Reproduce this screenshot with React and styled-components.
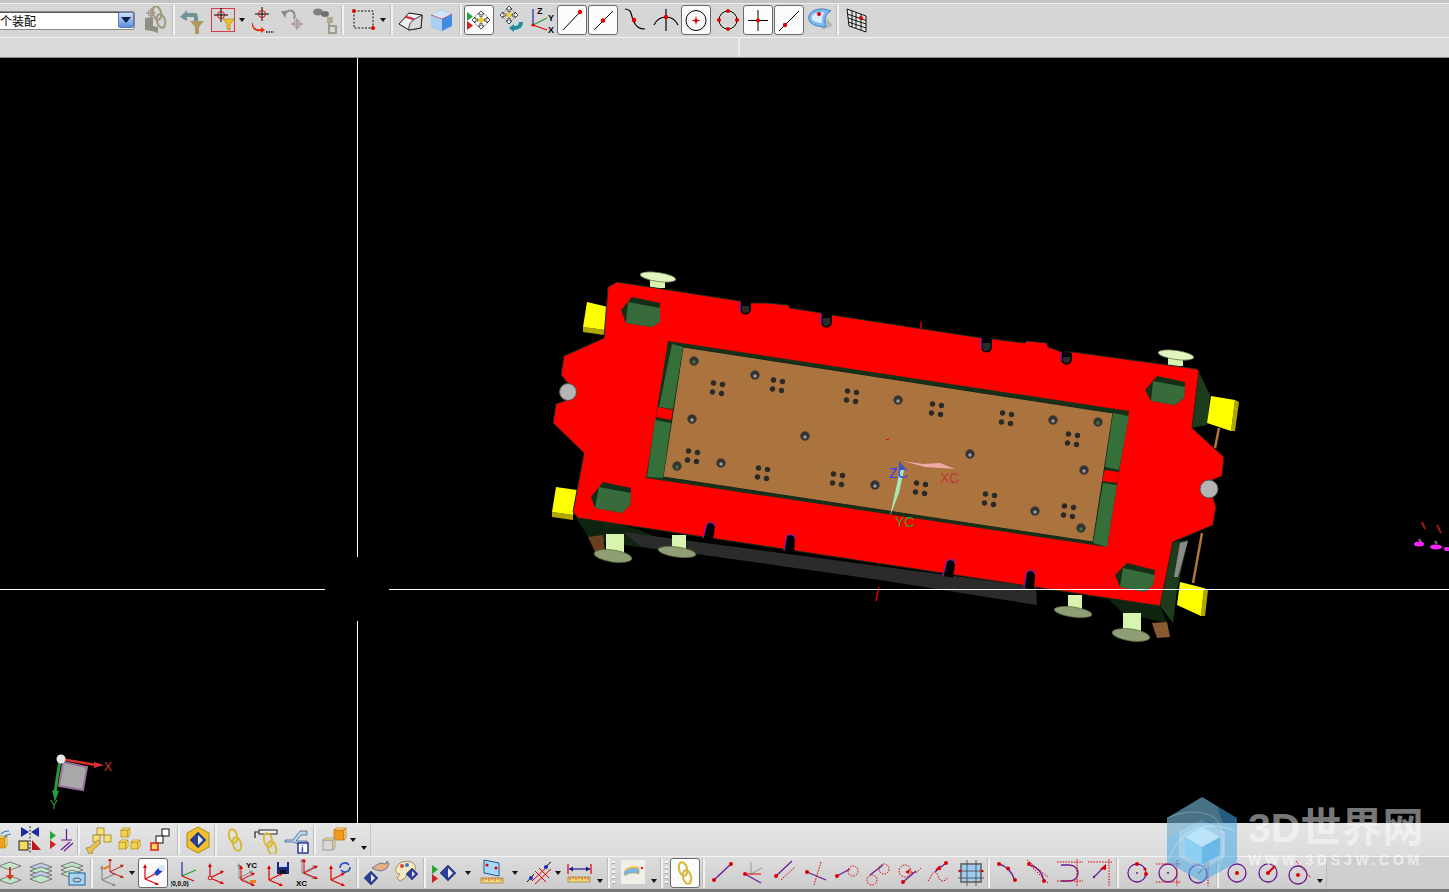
import React from 'react';
import styled, { createGlobalStyle } from 'styled-components';

const GlobalStyle = createGlobalStyle`
  html, body { margin: 0; padding: 0; background: #000; overflow: hidden; }
  body { font-family: "Liberation Sans", Arial, sans-serif; }
`;

const RED = '#e00000';
const PUR = '#6a1a96';
const GOLD = '#d8b83a';

/* small drawing helpers for the toolbar icons, all on a 28x28 box */
const Dot = ({ x, y, r = 2, c = RED }) => <circle cx={x} cy={y} r={r} fill={c} />;
const L = ({ d, c = '#000', w = 1, dash }) => (
  <path d={d} fill="none" stroke={c} strokeWidth={w} strokeDasharray={dash} />
);
const Dash = ({ d }) => <L d={d} c={RED} w={1} dash="1.6 1.2" />;
const Cross = ({ x, y, c = '#000', ring = RED, s = 8, r = 4 }) => (
  <>
    <L d={`M${x - s} ${y}H${x + s}M${x} ${y - s}V${y + s}`} c={c} />
    <circle cx={x} cy={y} r={r} fill="none" stroke={ring} />
  </>
);
const Funnel = ({ x, y, c = '#f0c020' }) => (
  <path d={`M${x} ${y}h11l-4 5v6l-3-1v-5z`} fill={c} stroke="#8a7020" strokeWidth=".5" />
);
const Triad = ({ x = 6, y = 20, c = RED, w = 1.2 }) => (
  <g>
    <L d={`M${x} ${y}V${y - 13}M${x} ${y}L${x + 12} ${y - 6}M${x} ${y}L${x + 12} ${y + 5}`} c={c} w={w} />
    <path d={`M${x - 2} ${y - 11}L${x} ${y - 15}L${x + 2} ${y - 11}z`} fill={c} />
    <path d={`M${x + 10} ${y - 7.5}L${x + 14} ${y - 7}L${x + 11.5} ${y - 4}z`} fill={c} />
    <path d={`M${x + 10} ${y + 6}L${x + 14} ${y + 6}L${x + 11.5} ${y + 3}z`} fill={c} />
  </g>
);
const Diamond = ({ x, y, s = 6 }) => (
  <g>
    <path d={`M${x} ${y - s}L${x + s} ${y}L${x} ${y + s}L${x - s} ${y}z`} fill="#2c3f98" stroke="#1a2560" strokeWidth=".5" />
    <path d={`M${x} ${y - s + 3}L${x + s - 3} ${y}L${x} ${y + s - 3}z`} fill="#e8eefc" />
  </g>
);
const Chain = ({ x = 14, y = 14, c = GOLD }) => (
  <g fill="none" stroke={c} strokeWidth="2">
    <ellipse cx={x - 2} cy={y - 4} rx="4" ry="7" transform={`rotate(-14 ${x - 2} ${y - 4})`} />
    <ellipse cx={x + 2} cy={y + 4} rx="4" ry="7" transform={`rotate(-14 ${x + 2} ${y + 4})`} />
  </g>
);
const Box = ({ x, y, s = 7, c = '#f4d050', e = '#b08a10' }) => (
  <g stroke={e} strokeWidth=".7">
    <rect x={x} y={y} width={s} height={s} fill={c} />
    <path d={`M${x} ${y}l2-2h${s}l-2 2zM${x + s} ${y}l2-2v${s}l-2 2z`} fill="#fbe68a" />
  </g>
);
const Tris = ({ x = 3, y = 7 }) => (
  <>
    <path d={`M${x} ${y}l6 4.5l-6 4.5z`} fill="#22a838" />
    <path d={`M${x} ${y + 9}l6 4.5l-6 4.5z`} fill="#d02020" />
  </>
);
const Arrows4 = ({ x, y }) => (
  <g fill="#fff" stroke="#222" strokeWidth=".8">
    <path d={`M${x} ${y - 9}l3 3h-2v3h-2v-3h-2z`} />
    <path d={`M${x} ${y + 9}l3-3h-2v-3h-2v3h-2z`} />
    <path d={`M${x - 9} ${y}l3 3v-2h3v-2h-3v-2z`} />
    <path d={`M${x + 9} ${y}l-3 3v-2h-3v-2h3v-2z`} />
  </g>
);
const Layer = ({ y, c = '#bfe8c8' }) => (
  <path d={`M2 ${y}L13 ${y - 4}L24 ${y}L13 ${y + 4}z`} fill={c} stroke="#555" strokeWidth=".7" />
);
const Ruler = ({ x, y, w = 22 }) => (
  <g>
    <rect x={x} y={y} width={w} height="5" fill="#f0d878" stroke="#8a7020" strokeWidth=".6" />
    <L d={`M${x + 2} ${y}v3M${x + 5} ${y}v2M${x + 8} ${y}v3M${x + 11} ${y}v2M${x + 14} ${y}v3M${x + 17} ${y}v2M${x + 20} ${y}v3`} c={RED} w=".6" />
  </g>
);

const icons = {
  asmFilter: (
    <>
      <path d="M3 12l8-1v9l5 1v6l-6-2-7-1z" fill="#8e8e86" />
      <Cross x={9} y={7} c="#8a8a80" ring="#b08080" s={5} r={3} />
      <Chain x={17} y={11} c="#a09a78" />
    </>
  ),
  backFilter: (
    <>
      <path d="M2 11L9 4v3h8c2 0 3 2 3 5v3h-4v-3c0-1-1-1-2-1H9v4z" fill="#6f9498" />
      <path d="M12 15h14l-5 6v7h-4v-7z" fill="#b09a60" />
    </>
  ),
  crossFilter: (
    <>
      <Cross x={12} y={9} s={7} r={3.5} />
      <Funnel x={14} y={13} />
    </>
  ),
  crossArrow: (
    <>
      <Cross x={14} y={8} s={7} r={3.5} />
      <path d="M5 17c0 5 4 7 8 6v-2l4 3-4 3v-2c-5 1-10-2-9-8z" fill="#e83010" />
      <L d="M18 26h8" c="#222" w="1.5" dash="1.5 1" />
    </>
  ),
  undoCross: (
    <>
      <L d="M5 9c2-5 8-6 10-2 1 2 1 4 0 6" c="#8a8a8a" w="2" />
      <path d="M2 5l6 0-2 7z" fill="#8a8a8a" />
      <Cross x={18} y={18} c="#8a8a8a" ring="#b08080" s={6} r={3.5} />
    </>
  ),
  binoc: (
    <>
      <ellipse cx="8" cy="6" rx="5" ry="3.5" fill="#808080" />
      <ellipse cx="15" cy="8" rx="4" ry="3" fill="#707070" />
      <rect x="17" y="11" width="6" height="6" fill="#b0a890" />
      <L d="M19 17v11M19 20h7v7h-7" c="#a09a88" w="2" />
    </>
  ),
  rubber: (
    <>
      <rect x="6" y="5" width="19" height="17" fill="none" stroke="#111" strokeDasharray="2 1.5" />
      <Dot x={6} y={5} r={2} />
      <Dot x={25} y={22} r={2} />
    </>
  ),
  block: (
    <>
      <path d="M2 18L12 7L25 9L24 22L12 24z" fill="#f0f0f0" stroke="#111" strokeWidth="1" />
      <path d="M12 24C11 20 14 15 18 13L25 9L24 22z" fill="#d8dce0" stroke="#111" strokeWidth=".8" />
      <path d="M8.500 10.700L17 13.300" stroke="#e02030" strokeWidth="2" />
    </>
  ),
  cube: (
    <>
      <path d="M3 9L13 4l11 4v12l-10 5-11-4z" fill="#3f8de0" />
      <path d="M3 9l11 4v12l-11-4z" fill="#a6d0f4" />
      <path d="M3 9L13 4l11 4-10 5z" fill="#d0e6fa" />
      <path d="M3 9l11 4 10-5" fill="none" stroke="#e04060" strokeWidth=".8" />
    </>
  ),
  snap: (
    <>
      <Tris x={2} y={6} />
      <circle cx="16" cy="14" r="7" fill="none" stroke="#aaa" />
      <Arrows4 x={16} y={14} />
      <Dot x={16} y={14} r={2.6} c="#f4d020" />
    </>
  ),
  snapBack: (
    <>
      <circle cx="12" cy="9" r="6" fill="none" stroke="#aaa" />
      <Arrows4 x={12} y={9} />
      <Dot x={12} y={9} r={2.4} c="#f4d020" />
      <path d="M12 22l5-4v2c3 0 5-1 5-4h4c0 5-4 8-9 8v2z" fill="#1f8f9a" />
    </>
  ),
  xyz: (
    <>
      <L d="M5 19V3" c="#1a2aa8" w="1.2" />
      <L d="M5 19L19 12" c="#20a030" w="1.2" />
      <L d="M5 19L19 24" c={RED} w="1.2" />
      <Dot x={5} y={19} r={1.6} />
      <Label x={9} y={8}>Z</Label>
      <Label x={20} y={15}>Y</Label>
      <Label x={20} y={27}>X</Label>
    </>
  ),
  lineEnd: (
    <>
      <L d="M5 24L22 6" />
      <Dot x={22} y={6} r={2.2} />
    </>
  ),
  lineMid: (
    <>
      <L d="M5 24L24 5" />
      <Dot x={14} y={14.5} r={2.2} />
    </>
  ),
  sCurve: (
    <>
      <L d="M4 3c8 0 6 9 9 13 2 5 5 7 11 7" w="1.2" />
      <Dot x={13} y={14} r={2.2} />
    </>
  ),
  inter: (
    <>
      <L d="M2 19c3-6 8-8 12-8s9 2 12 8" w="1.2" />
      <L d="M14 3v22" w="1.2" />
      <Dot x={14} y={11} r={2.2} />
    </>
  ),
  center: (
    <>
      <circle cx="14" cy="14.5" r="10" fill="none" stroke="#000" />
      <path d="M14 10l1 3.500 3.500 1-3.500 1-1 3.500-1-3.500-3.500-1 3.500-1z" fill={RED} />
    </>
  ),
  quad: (
    <>
      <circle cx="14" cy="14" r="9" fill="none" stroke="#000" />
      <Dot x={14} y={5} />
      <Dot x={14} y={23} />
      <Dot x={5} y={14} />
      <Dot x={23} y={14} />
    </>
  ),
  plus: (
    <>
      <L d="M4 14.500H24M14 4V25" />
      <Dot x={14} y={14.5} r={2} />
    </>
  ),
  lineNear: (
    <>
      <L d="M4 25L24 5" />
      <Dot x={10} y={19} r={2.2} />
    </>
  ),
  surf: (
    <>
      <path d="M14 24l12-4-6-8z" fill="#b8b8b8" />
      <path d="M2 10C4 3 15 1 24 5c-5 2-6 7-6 10 0 4 1 6 1 6C10 21 0 18 2 10z" fill="#7fb8ec" stroke="#3a80c8" />
      <path d="M5 10C8 6 14 5 18 7c-3 2-3 6-3 10-5 0-12-2-10-7z" fill="#d8ecfc" />
      <Dot x={12} y={8} r={2} />
    </>
  ),
  grid: (
    <>
      <path d="M5 3L24 10V26L7 20z" fill="#e8e8e8" stroke="#111" />
      <L d="M5.500 8L24 14.500M6 12L24 18M6.500 16L24 22M10 5v16M14 6.500v15.500M19 8v16" w=".9" />
      <Dot x={19} y={12} r={2} />
    </>
  ),

  cubesCut: (
    <>
      <Box x={10} y={12} s={10} c="#f0a020" />
      <L d="M16 8c2-2 5-3 8-3M19 11c2-2 4-3 7-3" c="#3a78c8" w="1.2" />
    </>
  ),
  mirror: (
    <>
      <path d="M5 1l8 5-8 5zM23 1l-8 5 8 5z" fill="#1a2aa8" />
      <rect x="3" y="15" width="9" height="9" fill="#f4d860" stroke="#222" />
      <path d="M16 14l9 10h-9z" fill="#c01818" />
      <L d="M14 0v27" c="#222" w="1" dash="2 1.500" />
    </>
  ),
  perp: (
    <>
      <Tris x={3} y={5} />
      <L d="M14 14H25M19.500 14V3" c={PUR} w="1.2" />
      <L d="M14 24L23 16M17 25L26 17" c={PUR} w="1.2" />
    </>
  ),
  wrench: (
    <>
      <rect x="13" y="2" width="7" height="7" fill="#f6e070" stroke="#8a7020" strokeWidth=".7" />
      <rect x="20" y="9" width="7" height="7" fill="#f6e070" stroke="#8a7020" strokeWidth=".7" />
      <rect x="9" y="9" width="7" height="7" fill="#f6e070" stroke="#8a7020" strokeWidth=".7" />
      <path d="M2 22l4-1 8-7 3 3-8 7-1 4-3 0-1-2z" fill="#e8c050" stroke="#8a7020" strokeWidth=".6" />
    </>
  ),
  cubes3: (
    <>
      <Box x={6} y={4} />
      <Box x={4} y={16} />
      <Box x={16} y={16} />
    </>
  ),
  stairs: (
    <>
      <rect x="16" y="3" width="7" height="7" fill="#fff" stroke="#111" />
      <rect x="10" y="10" width="7" height="7" fill="#fff" stroke="#111" />
      <rect x="5" y="17" width="7" height="7" fill="#f4d860" stroke="#e01010" strokeWidth="1.400" />
    </>
  ),
  hexDiamond: (
    <>
      <path d="M14 1L25 7V21L14 27L3 21V7z" fill="#f0c030" stroke="#b08a10" />
      <Diamond x={14} y={14} s={8} />
    </>
  ),
  chain: <Chain />,
  toolChain: (
    <>
      <rect x="7" y="4" width="18" height="4" fill="#eee" stroke="#222" />
      <L d="M7 6H3V12" c="#222" w="1.2" />
      <Chain x={18} y={18} />
    </>
  ),
  tree: (
    <>
      <path d="M2 14h8l7-9h7v4h-6l-5 6 5 0h6v4h-7l-7-3H2z" fill="#b8d4ec" stroke="#305878" strokeWidth=".7" />
      <rect x="15" y="17" width="10" height="10" fill="#fff" stroke="#1a2a90" strokeWidth="1.400" />
      <Label x={18} y={26} c="#1a2a90">i</Label>
    </>
  ),
  cubes2: (
    <>
      <Box x={14} y={4} s={10} c="#f49a20" e="#c07010" />
      <Box x={3} y={14} s={10} c="#d8d8d8" e="#888" />
    </>
  ),

  planes: (
    <>
      <Layer y={7} />
      <Layer y={21} />
      <path d="M12 8h2v8h3l-4 5-4-5h3z" fill="#e03020" />
    </>
  ),
  stack: (
    <>
      <Layer y={8} c="#c0cce8" />
      <Layer y={12} c="#bfe8c8" />
      <Layer y={16} c="#c0cce8" />
      <Layer y={20} c="#bfe8c8" />
    </>
  ),
  stackView: (
    <>
      <Layer y={7} />
      <Layer y={11} c="#d8e4dc" />
      <Layer y={15} />
      <rect x="10" y="14" width="16" height="12" fill="#a8d4f0" stroke="#1a60a0" />
      <ellipse cx="18" cy="21" rx="4" ry="2" fill="none" stroke="#555" />
    </>
  ),
  triadGray: (
    <>
      <Triad x={5} y={21} c="#8a8a8a" />
      <Triad x={13} y={13} c="#c02018" w={1} />
      <path d="M6 9l6-3 1 2-6 3z" fill="#f08020" />
    </>
  ),
  torch: (
    <>
      <Triad x={6} y={20} />
      <path d="M15 14l6-7 4 4-7 6z" fill="#1a40c8" />
      <ellipse cx="23" cy="9" rx="3.500" ry="3" fill="#d8e8fc" />
    </>
  ),
  origin: (
    <>
      <L d="M11 17V3" c="#1a2aa8" w="1.2" />
      <L d="M11 17L25 11" c="#20a030" w="1.2" />
      <L d="M11 17L23 22" c={RED} w="1.2" />
      <Label x={-1} y={27} s={6.5}>(0,0,0)</Label>
    </>
  ),
  circTriad: (
    <>
      <Triad x={8} y={19} />
      <circle cx="8" cy="19" r="1.800" fill="#fff" stroke={RED} />
    </>
  ),
  triadYC: (
    <>
      <Triad x={6} y={19} c="#8a8a8a" w={1} />
      <Triad x={8} y={21} w={1} />
      <Label x={13} y={9} s={8}>YC</Label>
      <path d="M17 21h6v3h-6z" fill="#f08020" />
    </>
  ),
  triadDisk: (
    <>
      <Triad x={5} y={21} />
      <rect x="13" y="3" width="12" height="12" fill="#1a2a80" />
      <rect x="15" y="3" width="8" height="5" fill="#d8d8e8" />
      <rect x="16" y="11" width="6" height="4" fill="#111" />
    </>
  ),
  triadXC: (
    <>
      <Triad x={7} y={14} c="#8a8a8a" w={1} />
      <Triad x={9} y={14} w={1} />
      <Label x={1} y={27} s={8}>XC</Label>
    </>
  ),
  triadRot: (
    <>
      <Triad x={5} y={21} />
      <L d="M14 9a5 5 0 0 1 9-3M24 8a5 5 0 0 1-9 3" c="#2050c0" w="1.600" />
    </>
  ),
  hand: (
    <>
      <path d="M10 9l8-5 6 1 1-3 2 3-2 4-5 3-6-1z" fill="#e8b080" stroke="#2a3a90" strokeWidth=".6" />
      <Diamond x={9} y={19} s={7} />
    </>
  ),
  palette: (
    <>
      <path d="M3 9c2-6 10-8 15-6 5 2 6 7 3 9l-6 2-3 5-5 3-3-3 3-4c-3 0-5-2-4-6z" fill="#f4e8c0" stroke="#8a7020" strokeWidth=".7" />
      <Dot x={9} y={7} c="#e04030" />
      <Dot x={14} y={6} c="#2a80d0" />
      <Diamond x={19} y={15} s={6} />
    </>
  ),
  triDiamond: (
    <>
      <Tris x={2} y={6} />
      <Diamond x={18} y={14} s={8} />
    </>
  ),
  planeRuler: (
    <>
      <path d="M6 1l15 3v13l-15-3z" fill="#a8d8f4" stroke="#1a5a90" />
      <Dot x={9} y={6} r={1.500} />
      <Dot x={18} y={9} r={1.500} />
      <Ruler x={3} y={19} />
    </>
  ),
  hatch: (
    <>
      <L d="M3 23L10 15M20 9L27 3" c="#111" w="1" />
      <L d="M8 22L24 7M11 25L27 10M11 12L22 23M15 9L25 19" c={RED} w="1" />
      <Dot x={7} y={19} r={2} c="#1a30c8" />
      <Dot x={22} y={8} r={2} c="#1a30c8" />
    </>
  ),
  dimRuler: (
    <>
      <L d="M3 5V15M26 5V15" c={RED} w="1.200" />
      <L d="M4 10H25" c="#1a1a90" w="1.200" />
      <path d="M4 10l4-2.500v5zM25 10l-4-2.500v5z" fill="#1a1a90" />
      <Ruler x={3} y={18} />
    </>
  ),
  paintTile: (
    <>
      <rect x="2" y="1" width="24" height="24" fill="#f0efe8" />
      <path d="M5 13c3-4 11-5 15-3v5c-5-2-11-1-14 2z" fill="#78b4e8" stroke="#c8a040" strokeWidth=".6" />
      <path d="M6 11c4-3 9-4 14-2" fill="none" stroke="#f0c040" strokeWidth="1.500" />
      <Dot x={23} y={9} r={1.300} c="#e03020" />
    </>
  ),
  ln: (
    <>
      <L d="M5 21L22 5" c={PUR} w="1.300" />
      <Dot x={5} y={21} />
      <Dot x={22} y={5} />
    </>
  ),
  lnTriad: (
    <>
      <L d="M11 15V3M11 15L22 9" c="#999" />
      <L d="M5 15L21 24" c={PUR} w="1.300" />
      <L d="M5 15H21" c={RED} w="1" />
      <Dot x={5} y={15} />
    </>
  ),
  lnPar: (
    <>
      <L d="M5 17L21 2" c={PUR} w="1.300" />
      <Dash d="M10 21L24 8" />
      <Dot x={5} y={17} />
    </>
  ),
  lnPerp: (
    <>
      <L d="M5 13L24 21" c={PUR} w="1.300" />
      <Dash d="M19 3L12 26" />
      <Dot x={5} y={13} />
    </>
  ),
  lnCirc: (
    <>
      <L d="M4 17L17 10" c={PUR} w="1.300" />
      <circle cx="20" cy="12" r="5" fill="none" stroke={RED} strokeDasharray="1.600 1.200" />
      <Dot x={4} y={17} />
    </>
  ),
  lnTwoCirc: (
    <>
      <circle cx="8" cy="21" r="5" fill="none" stroke={RED} strokeDasharray="1.600 1.200" />
      <circle cx="20" cy="10" r="5" fill="none" stroke={RED} strokeDasharray="1.600 1.200" />
      <L d="M6 16L19 6" c={PUR} w="1.300" />
    </>
  ),
  lnCurve: (
    <>
      <circle cx="10" cy="12" r="6" fill="none" stroke={RED} strokeDasharray="1.600 1.200" />
      <Dash d="M16 14c3-1 4-1 5 0 2-2 3-3 5-5" />
      <L d="M8 23L21 12" c={PUR} w="1.300" />
      <Dot x={8} y={23} />
      <path d="M10 13l5-3-1 5z" fill={RED} />
    </>
  ),
  lnWave: (
    <>
      <Dash d="M2 22c3-3 3-8 7-9 3 0 3 8 7 9 3 0 5-2 6-4" />
      <L d="M9 13L20 4" c={PUR} w="1.300" />
      <Dot x={20} y={4} />
      <path d="M9 11l5-5 1 5z" fill={RED} />
    </>
  ),
  gridBlue: (
    <>
      <rect x="4" y="5" width="20" height="18" fill="#9cccf0" stroke="#777" strokeWidth="2" />
      <L d="M1 12H27M1 19H27M10 1V27M19 1V27" c="#444" w=".8" />
      <Dot x={3} y={12} r={1.300} />
      <Dot x={25} y={12} r={1.300} />
    </>
  ),
  arc: (
    <>
      <L d="M6 5c8 2 13 7 16 17" c={PUR} w="1.300" />
      <Dot x={6} y={5} />
      <Dot x={15} y={9.5} />
      <Dot x={22} y={21} />
    </>
  ),
  arcTan: (
    <>
      <L d="M6 6c8 2 12 7 14 16" c={PUR} w="1.300" />
      <Dash d="M3 1L24 18M24 24L6 6" />
      <Dot x={5} y={5} />
      <Dot x={20} y={22} />
    </>
  ),
  arcTwo: (
    <>
      <L d="M6 6h8c6 0 9 4 9 8s-3 8-9 8H6" c={PUR} w="1.300" />
      <Dash d="M2 3h26M2 22h26M22 0v28" />
    </>
  ),
  arcPt: (
    <>
      <L d="M8 18L20 6" c={PUR} w="1.300" />
      <Dash d="M2 3h24M23 0v27" />
      <path d="M20 5v6l-6-1z" fill={RED} />
      <Dot x={8} y={18} r={1.200} c={PUR} />
    </>
  ),
  circ3: (
    <>
      <circle cx="14" cy="14" r="9" fill="none" stroke={PUR} strokeWidth="1.300" />
      <Dot x={14} y={14} r={1} c={PUR} />
      <Dot x={14} y={5} />
      <Dot x={22} y={10} r={1.600} />
      <Dot x={23} y={15} />
    </>
  ),
  circTan: (
    <>
      <circle cx="14" cy="14" r="9" fill="none" stroke={PUR} strokeWidth="1.300" />
      <Dot x={14} y={14} r={1} c={PUR} />
      <Dash d="M2 5h24M2 23h24M23 1v26" />
    </>
  ),
  circRad: (
    <>
      <circle cx="13" cy="15" r="9" fill="none" stroke={PUR} strokeWidth="1.300" />
      <L d="M13 15L21 6" c="#888" w="1.500" />
      <Dash d="M8 5h16M23 1v26" />
    </>
  ),
  circDot: (
    <>
      <circle cx="14" cy="14" r="9" fill="none" stroke={PUR} strokeWidth="1.300" />
      <Dot x={14} y={14} />
    </>
  ),
  circArrow: (
    <>
      <circle cx="14" cy="14" r="9" fill="none" stroke={PUR} strokeWidth="1.300" />
      <L d="M14 14L21 7" c={RED} w="2" />
      <Dot x={14} y={14} />
    </>
  ),
  circLine: (
    <>
      <circle cx="13" cy="16" r="9" fill="none" stroke={PUR} strokeWidth="1.300" />
      <Dot x={13} y={16} />
      <Dash d="M11 2L26 19" />
    </>
  ),
};

function Label({ x, y, s = 9, c = '#000', children }) {
  return (
    <text x={x} y={y} fontSize={s} fontWeight="700" fill={c} fontFamily="Liberation Sans, Arial, sans-serif">
      {children}
    </text>
  );
}

const topTools = [
  { i: 'asmFilter' }, { s: 5 }, { i: 'backFilter' }, { i: 'crossFilter', mark: true }, { d: 8 },
  { i: 'crossArrow' }, { i: 'undoCross' }, { i: 'binoc' }, { s: 7 }, { i: 'rubber' }, { d: 12 }, { s: 6 },
  { i: 'block' }, { i: 'cube' }, { s: 7 }, { i: 'snap', on: true }, { i: 'snapBack' }, { i: 'xyz' },
  { i: 'lineEnd', on: true }, { i: 'lineMid', on: true }, { i: 'sCurve' }, { i: 'inter' },
  { i: 'center', on: true }, { i: 'quad' }, { i: 'plus', on: true }, { i: 'lineNear', on: true },
  { i: 'surf' }, { s: 4 }, { i: 'grid' },
];

const upperTools = [
  { i: 'cubesCut' }, { i: 'mirror' }, { i: 'perp' }, { s: 6 }, { i: 'wrench' }, { i: 'cubes3' }, { i: 'stairs' },
  { s: 7 }, { i: 'hexDiamond' }, { s: 6 }, { i: 'chain' }, { i: 'toolChain' }, { i: 'tree' }, { s: 6 },
  { i: 'cubes2' }, { d: 8 }, { d: 13, low: true },
];

const lowerTools = [
  { i: 'planes' }, { i: 'stack' }, { i: 'stackView' }, { s: 7 }, { i: 'triadGray' }, { d: 12 },
  { i: 'torch', on: true }, { i: 'origin' }, { i: 'circTriad' }, { i: 'triadYC' }, { i: 'triadDisk' },
  { i: 'triadXC' }, { i: 'triadRot' }, { s: 5 }, { i: 'hand' }, { i: 'palette' }, { s: 6 },
  { i: 'triDiamond' }, { d: 17 }, { i: 'planeRuler' }, { d: 15 }, { i: 'hatch' }, { d: 10 },
  { i: 'dimRuler' }, { d: 12, low: true }, { s: 5 }, { g: true }, { i: 'paintTile' }, { d: 11, low: true },
  { s: 5 }, { g: true }, { i: 'chain', on: true }, { s: 6 }, { i: 'ln' }, { i: 'lnTriad' }, { i: 'lnPar' },
  { i: 'lnPerp' }, { i: 'lnCirc' }, { i: 'lnTwoCirc' }, { i: 'lnCurve' }, { i: 'lnWave' }, { i: 'gridBlue' },
  { s: 5 }, { i: 'arc' }, { i: 'arcTan' }, { i: 'arcTwo' }, { i: 'arcPt' }, { s: 6 }, { i: 'circ3' },
  { i: 'circTan' }, { i: 'circRad' }, { s: 7 }, { i: 'circDot' }, { i: 'circArrow' }, { i: 'circLine' },
  { d: 12, low: true },
];

const Page = styled.div`
  width: 1449px;
  height: 892px;
  display: flex;
  flex-direction: column;
  position: relative;
  overflow: hidden;
  background: #000;
`;

const TopBar = styled.div`
  height: 34px;
  display: flex;
  align-items: center;
  background: #d6d6d6;
  border-top: 3px solid #c4c4c4;
  border-bottom: 1px solid #f0f0f0;
  box-shadow: inset 0 1px 0 #ececec;
`;

const Combo = styled.div`
  width: 135px;
  height: 19px;
  margin-right: 5px;
  box-sizing: border-box;
  display: flex;
  align-items: center;
  background: #fff;
  border: 1px solid #8a8a8a;
  border-left: 0;
  border-radius: 0 3px 3px 0;
  box-shadow: inset 0 1px 0 #555;
`;

const ComboText = styled.span`
  flex: 1;
  font: 12px "Noto Sans CJK SC", "Liberation Sans", sans-serif;
  line-height: 17px;
  color: #000;
`;

const ComboButton = styled.span`
  width: 16px;
  height: 16px;
  display: flex;
  align-items: center;
  justify-content: center;
  background: linear-gradient(#cfe0f8, #5c8ee0);
  border: 1px solid #5a7ab8;
  border-radius: 2px;
  box-sizing: border-box;
  &::after {
    content: '';
    border-left: 5px solid transparent;
    border-right: 5px solid transparent;
    border-top: 6px solid #10204a;
  }
`;

const StatusStrip = styled.div`
  height: 19px;
  display: flex;
  background: #d9d9d9;
  border-bottom: 1px solid #8c8c8c;
`;

const StatusCell = styled.div`
  width: ${(p) => p.$w}px;
  flex: ${(p) => (p.$w ? 'none' : 1)};
  border-right: ${(p) => (p.$w ? '2px solid #ececec' : '0')};
  box-sizing: border-box;
`;

const Viewport = styled.div`
  flex: 1;
  min-height: 0;
  background: #000;
`;

const Scene = styled.svg`
  display: block;
  width: 1449px;
  height: 765px;
`;

const BottomBars = styled.div`
  height: 69px;
  display: flex;
  flex-direction: column;
`;

const UpperBand = styled.div`
  height: 33px;
  display: flex;
  background: linear-gradient(#e6e6e6, #d8d8d8);
  border-bottom: 1px solid #f4f4f4;
`;

const Row = styled.div`
  display: flex;
  align-items: center;
  height: 100%;
  margin-left: ${(p) => p.$start || 0}px;
`;

const UpperTail = styled.div`
  flex: 1;
  background: linear-gradient(#e4e4e4, #dcdcdc);
  border-left: 1px solid #c4c4c4;
`;

const LowerBand = styled.div`
  flex: 1;
  display: flex;
  background: #cfcfcf;
  border-bottom: 3px solid #777;
`;

const LowerTools = styled.div`
  width: 1327px;
  background: linear-gradient(#dcdcdc, #cccccc);
  border-right: 1px solid #bbb;
  box-sizing: border-box;
  overflow: hidden;
`;

const Slot = styled.div`
  width: 31px;
  height: 31px;
  flex: none;
  display: flex;
  align-items: center;
  justify-content: center;
  padding-right: ${(p) => (p.$on ? 1 : 0)}px;
  box-sizing: border-box;
`;

const Face = styled.div`
  width: ${(p) => (p.$mark ? 24 : 30)}px;
  height: ${(p) => (p.$mark ? 24 : 30)}px;
  box-sizing: border-box;
  display: flex;
  align-items: center;
  justify-content: center;
  flex: none;
  border-radius: ${(p) => (p.$on ? 3 : 0)}px;
  background: ${(p) => (p.$on ? '#fbfbfb' : 'transparent')};
  border: ${(p) => (p.$on ? '1px solid #6a6a6a' : p.$mark ? '1px solid #d83a48' : '0')};
  svg { flex: none; display: block; }
`;

const Drop = styled.div`
  width: ${(p) => p.$w}px;
  height: 100%;
  flex: none;
  display: flex;
  align-items: ${(p) => (p.$low ? 'flex-end' : 'center')};
  justify-content: center;
  padding-bottom: ${(p) => (p.$low ? 6 : 0)}px;
  box-sizing: border-box;
  &::after {
    content: '';
    border-left: 3.5px solid transparent;
    border-right: 3.5px solid transparent;
    border-top: 4px solid #111;
  }
`;

const Sep = styled.div`
  width: ${(p) => p.$w}px;
  height: 100%;
  flex: none;
  display: flex;
  align-items: center;
  justify-content: center;
  &::after {
    content: '';
    width: 2px;
    height: 30px;
    background: #f2f2f2;
    box-shadow: -1px 0 0 #bdbdbd;
  }
`;

const Grip = styled.div`
  width: 6px;
  height: 24px;
  flex: none;
  background: repeating-linear-gradient(#f6f6f6 0 2px, #a8a8a8 2px 3px, transparent 3px 5px);
  background-size: 3px 100%;
  background-repeat: no-repeat;
  background-position: 1px 0;
`;

const Watermark = styled.div`
  position: absolute;
  left: 1167px;
  top: 797px;
  display: flex;
  align-items: flex-start;
  gap: 10px;
  pointer-events: none;
`;

const MarkText = styled.div`
  display: flex;
  flex-direction: column;
  padding-top: 8px;
`;

const MarkTitle = styled.div`
  font: 700 41px/47px "Liberation Sans", "Noto Sans CJK SC", sans-serif;
  color: rgba(255, 255, 255, 0.48);
  white-space: nowrap;
`;

const MarkUrl = styled.div`
  font: 700 14px/16px "Liberation Sans", sans-serif;
  letter-spacing: 3.7px;
  color: rgba(255, 255, 255, 0.6);
  white-space: nowrap;
`;

const Tools = ({ items, start }) => (
  <Row $start={start}>
    {items.map((t, n) => {
      if (t.s) return <Sep key={n} $w={t.s} />;
      if (t.d) return <Drop key={n} $w={t.d} $low={t.low} />;
      if (t.g) return <Grip key={n} />;
      return (
        <Slot key={n} $on={t.on}>
          <Face $on={t.on} $mark={t.mark}>
            <svg width="28" height="28" viewBox="0 0 28 28">{icons[t.i]}</svg>
          </Face>
        </Slot>
      );
    })}
  </Row>
);

/* the model on screen, in page coordinates */
const plate = `617,282 740,301 751,303 767,303 788,305 790,308 822,313 832,315 982,338 993,339 1025,343 1027,341 1047,343
  1048,347 1062,352 1073,352 1197,369 1199,371 1192,428 1224,457 1222,476 1208,482 1216,507 1213,525 1173,542 1160,606
  578,518 573,512 584,453 553,423 556,404 567,400 577,393 567,382 561,375 564,356 604,338 608,287`;

const cornerPockets = [
  ['632,297 660,303 660,322 652,327 626,323 621,310', '628,302 660,308 660,322 652,327 626,323'],
  ['603,482 631,488 630,505 622,513 595,508 591,497', '599,487 631,493 630,505 622,513 595,508'],
  ['1157,376 1185,382 1184,398 1175,405 1151,401 1145,390', '1153,381 1185,387 1184,398 1175,405 1151,401'],
  ['1127,563 1155,570 1153,585 1145,592 1120,587 1115,575', '1123,568 1155,575 1153,585 1145,592 1120,587'],
];

const blocks = [
  ['587,302 608,307 605,330 583,327', '583,327 605,330 604,335 583,332'],
  ['556,487 577,490 573,515 552,512', '552,512 573,515 573,520 552,517'],
  ['1211,396 1235,400 1231,431 1207,423', '1235,400 1239,402 1235,431 1231,431'],
  ['1180,582 1204,588 1201,616 1177,605', '1204,588 1208,590 1205,616 1201,616'],
];

const screws = [
  [694, 361, 1], [755, 375], [692, 419], [805, 436], [721, 463], [677, 466, 1], [875, 485], [898, 400],
  [1053, 420], [1098, 422, 1], [970, 454], [1084, 470], [1035, 511], [1081, 528, 1],
];

const clusters = [
  [718, 388], [778, 385], [852, 396], [693, 456], [763, 473], [838, 479], [937, 409], [1007, 418],
  [1073, 439], [921, 488], [990, 499], [1069, 511],
];

const clusterHoles = [[-4.5, -5], [4.5, -3.5], [-5.5, 4], [3.5, 5.5]];

// slots: left edge, depth start, depth end
const topNotches = [[740, 300, 311], [821, 312, 324], [981, 337, 349], [1061, 351, 361]];
const bottomNotches = [[706, 527, 703, 538], [786, 539, 784, 551], [946, 564, 943, 576], [1026, 575, 1024, 588]];

const bolts = [
  { sx: 650, sy: 278, sw: 15, sh: 10, hx: 658, hy: 277, rx: 18, ry: 4.5, head: '#e2f4c0' },
  { sx: 1168, sy: 356, sw: 15, sh: 10, hx: 1176, hy: 355, rx: 18, ry: 4.5, head: '#e2f4c0' },
  { sx: 606, sy: 534, sw: 18, sh: 24, hx: 613, hy: 556, rx: 19, ry: 6, head: '#8f9e74' },
  { sx: 672, sy: 535, sw: 14, sh: 14, hx: 677, hy: 552, rx: 19, ry: 5, head: '#8f9e74' },
  { sx: 1068, sy: 595, sw: 14, sh: 14, hx: 1073, hy: 612, rx: 19, ry: 5, head: '#8f9e74' },
  { sx: 1123, sy: 613, sw: 18, sh: 22, hx: 1131, hy: 635, rx: 19, ry: 6, head: '#8f9e74' },
];

const Model = () => (
  <g>
    {/* underside, behind the plate */}
    <polygon points="573,512 590,540 700,556 640,530" fill="#0f2410" />
    <polygon points="623,532 1036,587 1037,605 880,580 718,557 640,546" fill="#2b2b2b" />
    <polygon points="1107,598 1160,606 1167,623 1123,613" fill="#0f2410" />
    <polygon points="1199,372 1210,395 1207,425 1192,428" fill="#1c3c1c" />
    <polygon points="1173,542 1188,540 1177,590 1173,623 1160,606" fill="#1c3c1c" />
    <polygon points="1180,543 1188,541 1178,577 1174,577" fill="#8a8a8a" />
    <path d="M1219 428L1215 448M1202 533L1193 583" stroke="#b0763e" strokeWidth="2.5" />
    <polygon points="588,537 603,535 605,550 595,552" fill="#6a3f20" />
    <polygon points="1152,623 1167,622 1170,637 1157,638" fill="#8a5a30" />

    {bolts.map((b) => (
      <g key={b.hx}>
        <rect x={b.sx} y={b.sy} width={b.sw} height={b.sh} fill="#d8f5b0" />
        <ellipse cx={b.hx} cy={b.hy} rx={b.rx} ry={b.ry} fill={b.head} stroke="#5a6a40" strokeWidth=".7" transform={`rotate(8 ${b.hx} ${b.hy})`} />
      </g>
    ))}

    {blocks.map(([face, side]) => (
      <g key={face}>
        <polygon points={side} fill="#b0a800" />
        <polygon points={face} fill="#ffff00" />
      </g>
    ))}

    <polygon points={plate} fill="#ff0000" stroke="#1a2a1a" strokeWidth="1" />

    {/* open slots along the long edges */}
    {topNotches.map(([x, y1, y2]) => (
      <g key={x}>
        <path d={`M${x} ${y1}V${y2 - 2}a5.5 5.5 0 0 0 11 0V${y1 + 2}z`} fill="#000" />
        <path d={`M${x + 1.5} ${y1 + 6}V${y2 - 2}a4 4 0 0 0 8 0V${y1 + 6}z`} fill="#2b2b2b" />
        <path d={`M${x} ${y1 + 1}V${y2}`} stroke="#8a1a9a" strokeWidth="1.500" />
      </g>
    ))}
    {bottomNotches.map(([tx, ty, bx, by]) => (
      <g key={tx}>
        <path d={`M${bx} ${by}L${tx} ${ty}a4.5 4.5 0 0 1 9 0L${bx + 10} ${by + 1.500}z`} fill="#000" />
        <path d={`M${bx} ${by}L${tx} ${ty}a4.5 4.5 0 0 1 9 0`} fill="none" stroke="#8a1a9a" strokeWidth="1.500" />
      </g>
    ))}

    {cornerPockets.map(([outer, front]) => (
      <g key={outer}>
        <polygon points={outer} fill="#152e18" />
        <polygon points={front} fill="#376b3b" />
      </g>
    ))}

    <circle cx="568" cy="392" r="8.500" fill="#b4b4b4" stroke="#555" />
    <circle cx="1209" cy="489" r="9" fill="#b4b4b4" stroke="#555" />

    {/* pocket with the brown insert */}
    <polygon points="668,341 1129,411 1107,547 646,478" fill="#173018" />
    <polygon points="683,347 1113,413 1093,542 663,477" fill="#ab743e" stroke="#14261a" />
    <polygon points="672,344 683,347 673,409 659,407" fill="#35703a" />
    <polygon points="655,420 671,423 663,478 647,477" fill="#35703a" />
    <polygon points="1113,413 1129,416 1119,470 1105,467" fill="#35703a" />
    <polygon points="1103,483 1117,485 1107,547 1093,543" fill="#35703a" />
    <polygon points="658,407 673,410 671,420 656,417" fill="#ff0000" />
    <polygon points="1105,470 1119,472 1117,483 1102,481" fill="#ff0000" />

    {screws.map(([x, y, green]) => (
      <g key={x}>
        <circle cx={x} cy={y} r="4.500" fill="#333" stroke="#5a4a38" strokeWidth=".6" />
        <circle cx={x} cy={y + 1} r="1.700" fill={green ? '#3f7a3f' : '#a0a0a0'} />
      </g>
    ))}
    {clusters.map(([x, y]) =>
      clusterHoles.map(([dx, dy]) => <circle key={`${x}${dx}`} cx={x + dx} cy={y + dy} r="2.700" fill="#2a2a2a" />)
    )}

    {/* work coordinate system */}
    <polygon points="903,461 923,464 940,463 955,469 925,467" fill="#f0a8a8" />
    <polygon points="900,470 904,470 899,493 890,516" fill="#a8e8b8" />
    <polygon points="899,461 905,468 899,469" fill="#3858b8" />
    <SceneText x={889} y={478} $c="#2a40ff">ZC</SceneText>
    <SceneText x={940} y={483} $c="#c03838">XC</SceneText>
    <SceneText x={895} y={527} $c="#30a030">YC</SceneText>
    <path d="M886 440l3-1" stroke="#e00000" />
    <path d="M879 587L876 601M921 322V328" stroke="#e00000" strokeWidth="1.500" />
  </g>
);

const SceneText = styled.text`
  font: 14px "Liberation Sans", sans-serif;
  fill: ${(p) => p.$c};
`;

const AxisText = styled.text`
  font: 12px "Liberation Sans", sans-serif;
  fill: ${(p) => p.$c};
`;

const Triad3D = () => (
  <g>
    <polygon points="63,762 87,767 83,790 59,786" fill="#a8a8a8" stroke="#9a6f9a" strokeWidth="2" />
    <path d="M61 759L96 765" stroke="#d83030" strokeWidth="2.500" />
    <polygon points="94,762 104,765 94,768" fill="#d83030" />
    <path d="M60 760L55 792" stroke="#2a9a3a" strokeWidth="3" />
    <polygon points="52,790 59,791 55,802" fill="#2a9a3a" />
    <circle cx="61" cy="759" r="4.500" fill="#e8e8e8" />
    <AxisText x={104} y={771} $c="#d83030">X</AxisText>
    <AxisText x={50} y={809} $c="#2a9a3a">Y</AxisText>
  </g>
);

const Stray = () => (
  <g>
    <path d="M1422 522l3 7M1437 525l4 8" stroke="#a01818" strokeWidth="2" />
    <path d="M1419 539l2 3M1435 541l2 3" stroke="#777" strokeWidth="2" />
    <ellipse cx="1419" cy="544" rx="5" ry="2.500" fill="#ff22ff" />
    <ellipse cx="1436" cy="547" rx="6" ry="2.500" fill="#ff22ff" />
    <ellipse cx="1447" cy="549" rx="3" ry="2" fill="#ff22ff" />
  </g>
);

const Logo = () => (
  <svg width="71" height="85" viewBox="0 0 71 85">
    <path d="M35 0L70 21V65L35 85L0 65V21z" fill="rgba(70,170,230,0.55)" />
    <path d="M0 21L35 0L50 9L58 32L35 22L12 35L0 42z" fill="rgba(200,190,170,0.22)" />
    <path d="M0 21C20 12 40 14 49 22C58 34 60 55 50 75" fill="none" stroke="rgba(255,255,255,0.25)" />
    <path d="M2 62C12 32 40 22 68 34" fill="none" stroke="rgba(255,255,255,0.35)" />
    <path d="M35 22L58 35V60L35 73L12 60V35z" fill="rgba(255,255,255,0.22)" />
    <path d="M35 30L53 40V58L35 68L18 58V40z" fill="rgba(190,230,250,0.85)" />
    <path d="M35 50L53 40V58L35 68z" fill="rgba(95,180,230,0.9)" />
    <path d="M35 50L18 40V58L35 68z" fill="rgba(135,205,240,0.9)" />
  </svg>
);

export default function App() {
  return (
    <Page>
      <GlobalStyle />
      <TopBar>
        <Combo>
          <ComboText>个装配</ComboText>
          <ComboButton />
        </Combo>
        <Tools items={topTools} />
      </TopBar>
      <StatusStrip>
        <StatusCell $w={740} />
        <StatusCell />
      </StatusStrip>
      <Viewport>
        <Scene viewBox="0 58 1449 765">
          <Model />
          <Stray />
          <Triad3D />
          <path d="M357.500 58V557M357.500 621V823M0 589.500H325M389 589.500H1449" stroke="#fff" strokeWidth="1" />
        </Scene>
      </Viewport>
      <BottomBars>
        <UpperBand>
          <Tools items={upperTools} start={-17} />
          <UpperTail />
        </UpperBand>
        <LowerBand>
          <LowerTools>
            <Tools items={lowerTools} start={-5} />
          </LowerTools>
        </LowerBand>
      </BottomBars>
      <Watermark>
        <Logo />
        <MarkText>
          <MarkTitle>3D世界网</MarkTitle>
          <MarkUrl>WWW.3DSJW.COM</MarkUrl>
        </MarkText>
      </Watermark>
    </Page>
  );
}
